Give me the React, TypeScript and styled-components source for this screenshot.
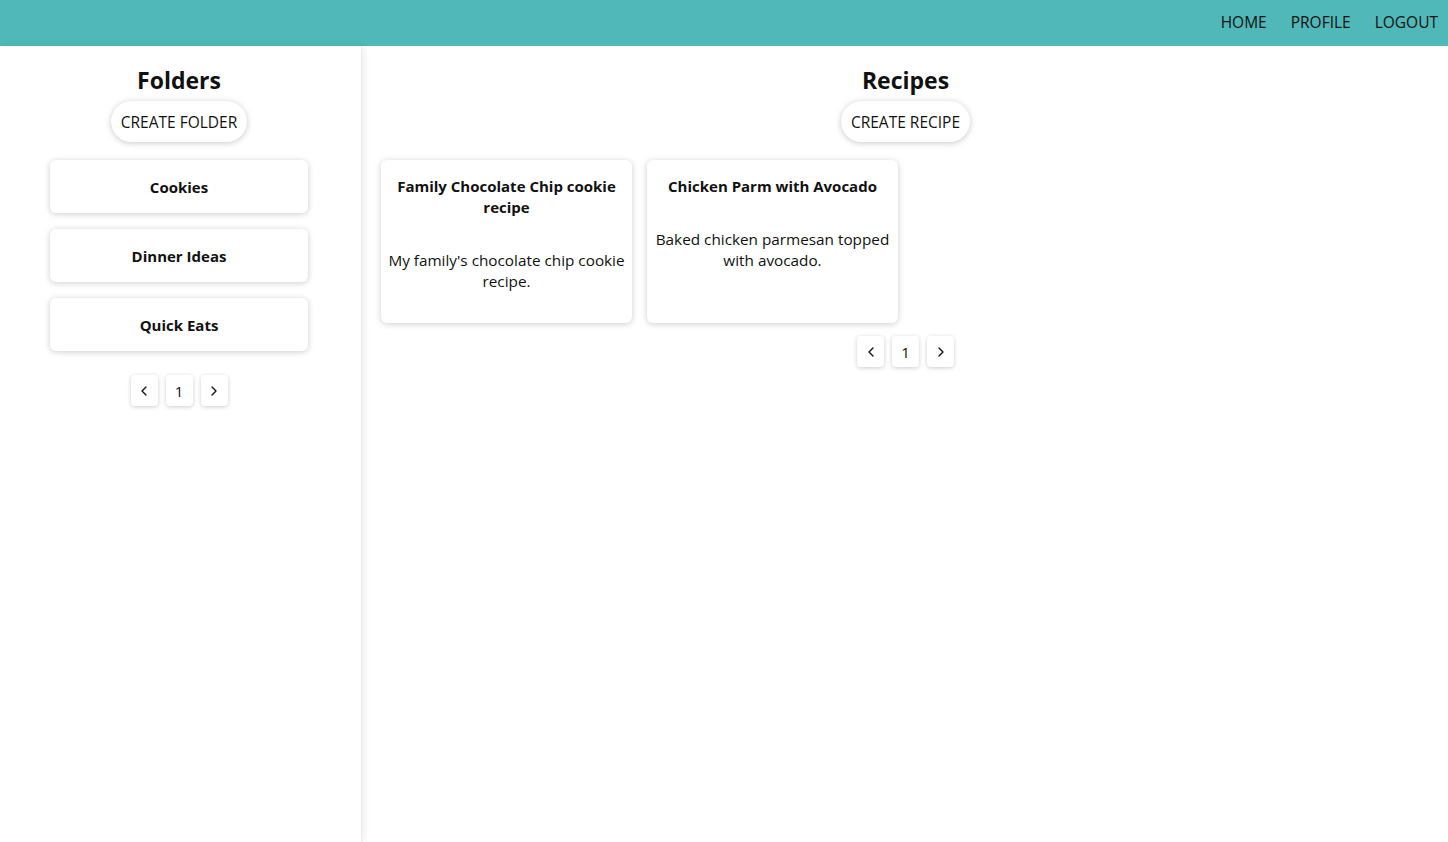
import React from "react";
import styled, { createGlobalStyle } from "styled-components";
import { ChevronLeft, ChevronRight } from "lucide-react";

const GlobalStyle = createGlobalStyle`
  body {
    margin: 0;
    font-family: "Open Sans", "Noto Sans", sans-serif;
    color: #111;
    background: #fff;
  }
  * { box-sizing: border-box; }
`;

const NavBar = styled.header`
  height: 46px;
  background: #50b8b8;
  display: flex;
  justify-content: flex-end;
  align-items: center;
  padding: 0 10px 2px 0;
  gap: 24px;
`;

const NavLink = styled.a`
  font-size: 15.5px;
  color: #111;
  text-decoration: none;
  text-transform: uppercase;
`;

const Layout = styled.div`
  display: flex;
  min-height: calc(100vh - 46px);
`;

const Sidebar = styled.aside`
  width: 361px;
  flex-shrink: 0;
  box-shadow: 1px 0 0 #ececec, 3px 0 7px rgba(0, 0, 0, 0.07);
  display: flex;
  flex-direction: column;
  align-items: center;
  padding: 20px 3px 0 0;
`;

const Main = styled.main`
  flex: 1;
  display: flex;
  flex-direction: column;
  align-items: center;
  padding: 20px 20px 0 22px;
`;

const Title = styled.h2`
  margin: 0;
  font-size: 23px;
  line-height: 28px;
  font-weight: 700;
`;

const PillButton = styled.button`
  margin-top: 7px;
  height: 41px;
  padding: 0 10px;
  border: none;
  border-radius: 21px;
  background: #fff;
  box-shadow: 0 1px 6px rgba(0, 0, 0, 0.22);
  font-family: inherit;
  font-size: 15.5px;
  color: #111;
  text-transform: uppercase;
  cursor: pointer;
`;

const FolderList = styled.div`
  margin-top: 18px;
  display: flex;
  flex-direction: column;
  gap: 16px;
`;

const FolderCard = styled.div`
  width: 258px;
  height: 53px;
  border-radius: 6px;
  background: #fff;
  box-shadow: 0 1px 6px rgba(0, 0, 0, 0.2);
  display: flex;
  align-items: center;
  justify-content: center;
  font-size: 15px;
  font-weight: 700;
`;

const RecipeGrid = styled.div`
  align-self: stretch;
  margin: 18px 0 0 -2px;
  display: flex;
  gap: 15px;
  align-items: stretch;
`;

const RecipeCard = styled.div`
  width: 251px;
  border-radius: 6px;
  background: #fff;
  box-shadow: 0 1px 6px rgba(0, 0, 0, 0.2);
  padding: 16px 5px 31px;
  text-align: center;
`;

const RecipeName = styled.h4`
  margin: 0 0 32px;
  font-size: 15px;
  line-height: 21px;
  font-weight: 700;
`;

const RecipeDesc = styled.p`
  margin: 0;
  font-size: 15.3px;
  line-height: 21px;
  color: #111;
`;

const Pager = styled.div<{ $top: number }>`
  margin-top: ${(p) => p.$top}px;
  display: flex;
  gap: 8px;
`;

const PageButton = styled.button`
  width: 27px;
  height: 31px;
  padding: 0;
  border: none;
  border-radius: 4px;
  background: #fff;
  box-shadow: 0 1px 4px rgba(0, 0, 0, 0.2);
  display: flex;
  align-items: center;
  justify-content: center;
  font-family: inherit;
  font-size: 15px;
  color: #111;
`;

const folders = ["Cookies", "Dinner Ideas", "Quick Eats"];

const recipes = [
  {
    name: "Family Chocolate Chip cookie recipe",
    desc: "My family's chocolate chip cookie recipe.",
  },
  {
    name: "Chicken Parm with Avocado",
    desc: "Baked chicken parmesan topped with avocado.",
  },
];

function Pagination({ top }: { top: number }) {
  return (
    <Pager $top={top}>
      <PageButton>
        <ChevronLeft size={16} strokeWidth={2} />
      </PageButton>
      <PageButton>1</PageButton>
      <PageButton>
        <ChevronRight size={16} strokeWidth={2} />
      </PageButton>
    </Pager>
  );
}

export default function App() {
  return (
    <>
      <GlobalStyle />
      <NavBar>
        <NavLink>Home</NavLink>
        <NavLink>Profile</NavLink>
        <NavLink>Logout</NavLink>
      </NavBar>
      <Layout>
        <Sidebar>
          <Title>Folders</Title>
          <PillButton>Create Folder</PillButton>
          <FolderList>
            {folders.map((f) => (
              <FolderCard key={f}>{f}</FolderCard>
            ))}
          </FolderList>
          <Pagination top={24} />
        </Sidebar>
        <Main>
          <Title>Recipes</Title>
          <PillButton>Create Recipe</PillButton>
          <RecipeGrid>
            {recipes.map((r) => (
              <RecipeCard key={r.name}>
                <RecipeName>{r.name}</RecipeName>
                <RecipeDesc>{r.desc}</RecipeDesc>
              </RecipeCard>
            ))}
          </RecipeGrid>
          <Pagination top={13} />
        </Main>
      </Layout>
    </>
  );
}
